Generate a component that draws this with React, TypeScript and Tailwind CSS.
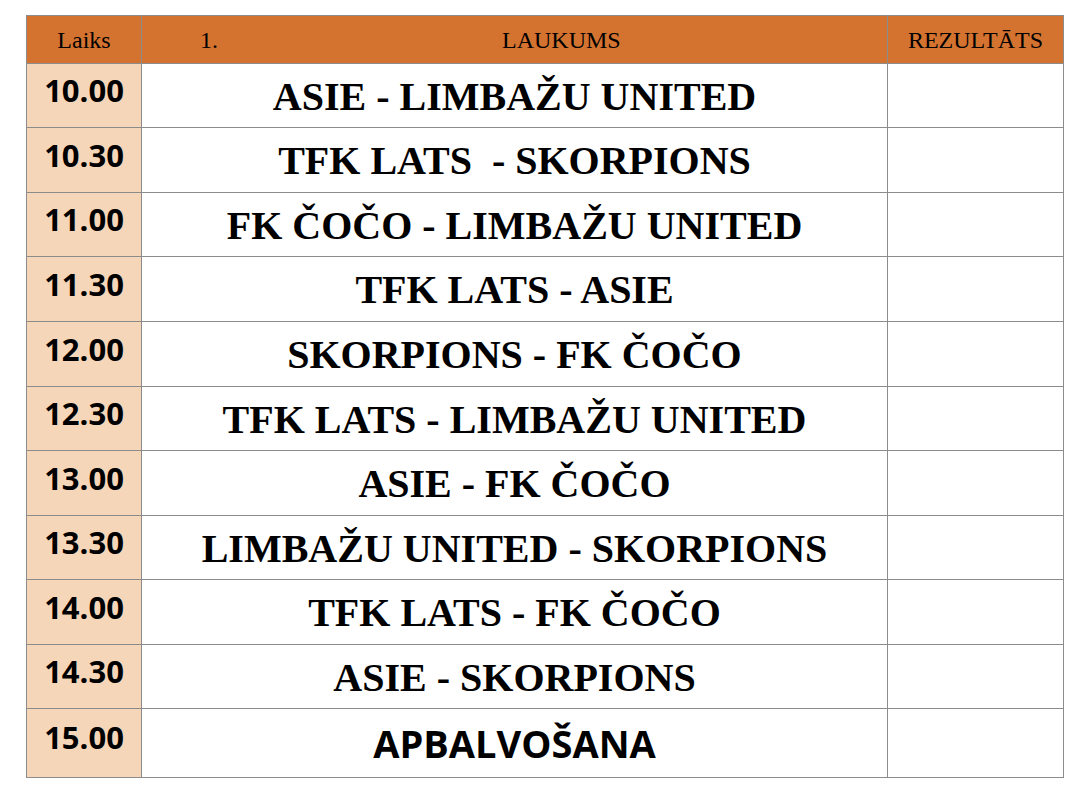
const rows: { time: string; match: string; h: number; award?: boolean }[] = [
  { time: "10.00", match: "ASIE - LIMBAŽU UNITED", h: 64 },
  { time: "10.30", match: "TFK LATS  - SKORPIONS", h: 65 },
  { time: "11.00", match: "FK ČOČO - LIMBAŽU UNITED", h: 64 },
  { time: "11.30", match: "TFK LATS - ASIE", h: 65 },
  { time: "12.00", match: "SKORPIONS - FK ČOČO", h: 65 },
  { time: "12.30", match: "TFK LATS - LIMBAŽU UNITED", h: 64 },
  { time: "13.00", match: "ASIE - FK ČOČO", h: 65 },
  { time: "13.30", match: "LIMBAŽU UNITED - SKORPIONS", h: 64 },
  { time: "14.00", match: "TFK LATS - FK ČOČO", h: 65 },
  { time: "14.30", match: "ASIE - SKORPIONS", h: 64 },
  { time: "15.00", match: "APBALVOŠANA", h: 69, award: true },
]

const serif = "font-['Liberation_Serif','Times_New_Roman',serif]"
const sans = "font-['Open_Sans','Noto_Sans',sans-serif]"

export default function App() {
  return (
    <div className="min-h-[802px] w-[1084px] bg-white pt-[15px] pl-[26px]">
      <table className="border-collapse text-black">
        <colgroup>
          <col className="w-[115px]" />
          <col className="w-[746px]" />
          <col className="w-[176px]" />
        </colgroup>
        <thead>
          <tr className={`h-[48px] bg-[#d47330] ${serif} text-[24px]`}>
            <th className="border border-[#8c8c8c] text-center font-normal">Laiks</th>
            <th className="border border-[#8c8c8c] p-0 font-normal">
              <div className="flex items-center pl-[58px]">
                <span>1.</span>
                <span className="ml-[284px]">LAUKUMS</span>
              </div>
            </th>
            <th className="border border-[#8c8c8c] text-center font-normal">REZULTĀTS</th>
          </tr>
        </thead>
        <tbody>
          {rows.map((r) => (
            <tr key={r.time} style={{ height: r.h }}>
              <td className={`border border-[#8c8c8c] bg-[#f6d6b9] pb-[10px] text-center align-middle ${sans} text-[31px] font-bold leading-none`}>
                <div className={r.award ? "-mt-[2px]" : ""}>{r.time}</div>
              </td>
              <td
                className={
                  r.award
                    ? `border border-[#8c8c8c] text-center align-middle ${sans} text-[38px] font-bold leading-none`
                    : `border border-[#8c8c8c] text-center align-middle ${serif} whitespace-pre pt-[2px] text-[40px] font-bold leading-none`
                }
              >
                {r.match}
              </td>
              <td className="border border-[#8c8c8c]" />
            </tr>
          ))}
        </tbody>
      </table>
    </div>
  )
}
